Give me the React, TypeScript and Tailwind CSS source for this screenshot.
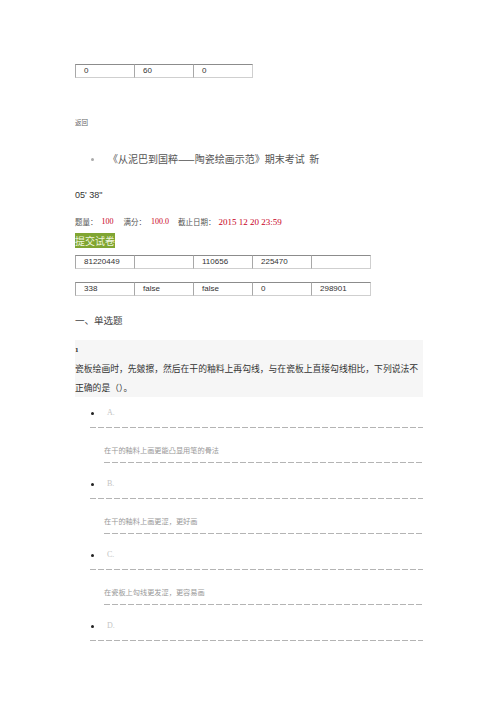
import React from "react";

const cjk = "font-['Noto_Sans_CJK_SC',sans-serif]";
const sans = "font-['Liberation_Sans','Noto_Sans_CJK_SC',sans-serif]";
const serif = "font-['Liberation_Serif','Noto_Sans_CJK_SC',serif]";

// long-dash rule used between the answer options
const dash =
  "h-px bg-[repeating-linear-gradient(to_right,#b4b4b4_0,#b4b4b4_6px,transparent_6px,transparent_8px)]";

function Cells({ values }: { values: string[] }) {
  return (
    <div className="flex">
      {values.map((v, i) => (
        <div
          key={i}
          className={`w-[60px] h-[14px] shrink-0 border border-[#cfcfcf] border-t-[#8c8c8c] border-l-[#a8a8a8] -ml-px first:ml-0 pl-[8px] text-[8px] leading-[12px] text-[#333] ${sans}`}
        >
          {v}
        </div>
      ))}
    </div>
  );
}

const options = [
  { label: "A.", text: "在干的釉料上画更能凸显用笔的骨法" },
  { label: "B.", text: "在干的釉料上画更涩，更好画" },
  { label: "C.", text: "在瓷板上勾线更发涩，更容易画" },
  { label: "D.", text: "" },
];

export default function App() {
  return (
    <div className={`w-[496px] h-[702px] bg-white overflow-hidden pl-[75px] pr-[73px] pt-[64px] ${cjk}`}>
      <Cells values={["0", "60", "0"]} />

      <div className="mt-[39px] h-[10px] text-[6.5px] leading-[10px] text-[#666]">返回</div>

      <div className="mt-[24px] flex items-center h-[16px]">
        <span className="w-[3px] h-[3px] rounded-full bg-[#aaa] ml-[16px]" />
        <span className="ml-[14px] text-[10px] leading-[16px] text-[#555]">
          《从泥巴到国粹——陶瓷绘画示范》期末考试&nbsp;&nbsp;新
        </span>
      </div>

      <div className={`mt-[22px] h-[12px] text-[9px] leading-[12px] text-[#333] ${sans}`}>05' 38"</div>

      <div className="mt-[15px] h-[12px] flex items-center text-[7.5px] leading-[12px] text-[#555]">
        <span>题量：</span>
        <span className={`ml-[4px] text-[8px] text-[#c8001e] ${serif}`}>100</span>
        <span className="ml-[10px]">满分：</span>
        <span className={`ml-[5px] text-[8px] text-[#c8001e] ${serif}`}>100.0</span>
        <span className="ml-[9px]">截止日期：</span>
        <span className={`ml-[3px] text-[9px] text-[#c8001e] ${serif}`}>2015 12 20 23:59</span>
      </div>

      <div className="mt-[5px] w-[40px] h-[15px] bg-[#80a532] text-[#eef5dc] text-[10px] leading-[15px] text-center whitespace-nowrap">
        提交试卷
      </div>

      <div className="mt-[7px]">
        <Cells values={["81220449", "", "110656", "225470", ""]} />
      </div>
      <div className="mt-[13px]">
        <Cells values={["338", "false", "false", "0", "298901"]} />
      </div>

      <div className="mt-[16px] h-[16px] text-[9.5px] leading-[16px] text-[#444]">一、单选题</div>

      <div className="mt-[12px] h-[57px] bg-[#f6f6f6] pt-[5px]">
        <div className={`h-[10px] text-[7px] leading-[10px] font-bold text-[#222] ${serif}`}>1</div>
        <div className="mt-[4px] text-[8.8px] leading-[19px] text-[#333] whitespace-nowrap">
          <div>瓷板绘画时，先皴擦，然后在干的釉料上再勾线，与在瓷板上直接勾线相比，下列说法不</div>
          <div>正确的是（）。</div>
        </div>
      </div>

      <div className="mt-[10px] flex flex-col">
        {options.map((o) => (
          <div key={o.label} className="flex flex-col">
            <div className="flex items-center h-[12px] ml-[16px]">
              <span className="w-[3px] h-[3px] rounded-full bg-[#222]" />
              <span className={`ml-[13px] text-[8px] leading-[12px] text-[#c4c4c4] ${serif}`}>{o.label}</span>
            </div>
            <div className={`mt-[8px] ml-[15px] ${dash}`} />
            {o.text && (
              <>
                <div className="mt-[16px] ml-[29px] h-[12px] text-[7.2px] leading-[12px] text-[#999]">{o.text}</div>
                <div className={`mt-[6px] ml-[29px] ${dash}`} />
                <div className="h-[15px]" />
              </>
            )}
          </div>
        ))}
      </div>
    </div>
  );
}
